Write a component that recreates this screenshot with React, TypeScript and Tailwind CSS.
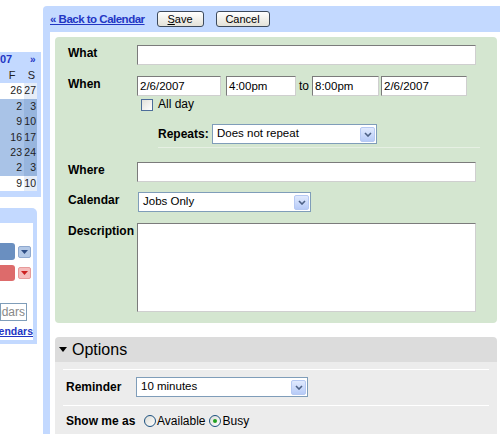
import React from 'react';

// weeks shown in the mini calendar (only Fri / Sat visible in this crop)
const calRows = [
  { f: '26', s: '27', hl: false, h: 'h-[16px]' },
  { f: '2', s: '3', hl: true, h: 'h-[15px]' },
  { f: '9', s: '10', hl: true, h: 'h-[16px]' },
  { f: '16', s: '17', hl: true, h: 'h-[15px]' },
  { f: '23', s: '24', hl: true, h: 'h-[15px]' },
  { f: '2', s: '3', hl: true, h: 'h-[16px]' },
  { f: '9', s: '10', hl: false, h: 'h-[15px]' },
];

const Chevron = () => (
  <svg width="8" height="5" viewBox="0 0 8 5">
    <path d="M1 1 L4 4 L7 1" fill="none" stroke="#4d6185" strokeWidth="1.6" />
  </svg>
);

const DropBtn = () => (
  <div className="w-[15px] h-[15px] rounded-[2px] border border-[#b6c9f3] bg-gradient-to-b from-[#e1eafe] to-[#b7cbf7] flex items-center justify-center">
    <Chevron />
  </div>
);

const Field = ({ className, value = '' }: { className: string; value?: string }) => (
  <div
    className={`bg-white border border-t-[#7b7b7b] border-l-[#7b7b7b] border-r-[#cfcfcf] border-b-[#cfcfcf] pl-[2px] text-[11.5px] leading-[18px] text-black whitespace-nowrap overflow-hidden ${className}`}
  >
    {value}
  </div>
);

const Select = ({ className, value }: { className: string; value: string }) => (
  <div
    className={`h-[20px] bg-white border border-[#7f9db9] flex items-center pl-[4px] pr-[1px] text-[11.5px] text-black ${className}`}
  >
    <span className="flex-1 whitespace-nowrap">{value}</span>
    <DropBtn />
  </div>
);

const Radio = ({ checked }: { checked?: boolean }) => (
  <div className="w-[12px] h-[12px] rounded-full border border-[#1c5180] bg-gradient-to-br from-[#dcdcd6] to-white flex items-center justify-center">
    {checked && <div className="w-[4px] h-[4px] rounded-full bg-[#21a121]" />}
  </div>
);

const Label = ({ children }: { children: React.ReactNode }) => (
  <div className="w-[69px] shrink-0 text-[12px] font-bold text-black leading-[16px]">{children}</div>
);

export default function App() {
  return (
    <div className="w-[500px] h-[434px] overflow-hidden bg-white flex font-['Liberation_Sans',Arial,sans-serif] text-black">
      {/* Sidebar (cropped) */}
      <aside className="w-[43px] shrink-0 pt-[52px] flex flex-col">
        {/* Mini calendar */}
        <div className="w-[41px] bg-[#c3d9ff] pr-[4px] pb-[6px]">
          <div className="h-[15px] flex items-center text-[11px] font-bold text-[#2236c4]">
            <div className="w-[24px] whitespace-nowrap">07</div>
            <div className="pl-[6px] text-[10px]">»</div>
          </div>
          <div className="h-[16px] flex items-center text-[11px] text-[#222]">
            <div className="w-[24px] text-center">F</div>
            <div className="w-[13px] text-center pl-[2px]">S</div>
          </div>
          {calRows.map((r, i) => (
            <div key={i} className={`${r.h} flex text-[10.5px] text-[#222] leading-[15px]`}>
              <div className={`w-[24px] text-right pr-[2px] ${r.hl ? 'bg-[#a9c3e7]' : 'bg-white'}`}>{r.f}</div>
              <div className={`w-[13px] text-right pr-px ${r.hl ? 'bg-[#97b5de]' : 'bg-[#e6edf8]'}`}>{r.s}</div>
            </div>
          ))}
        </div>

        {/* Calendars list */}
        <div className="mt-[11px] w-[37px]">
          <div className="h-[15px] bg-[#c3d9ff] rounded-tr-[5px]" />
          <div className="bg-white border-r-[4px] border-b-[4px] border-[#c3d9ff] pt-[20px] pb-[2px]">
            <div className="flex items-center">
              <div className="w-[15px] h-[17px] bg-[#6a8fc0] rounded-r-[3px]" />
              <div className="ml-[3px] w-[13px] h-[12px] rounded-[2px] border border-[#8fa9cf] bg-[#b3c8e6] flex items-center justify-center">
                <svg width="7" height="4" viewBox="0 0 7 4">
                  <path d="M0 0 H7 L3.5 4 Z" fill="#2f4f86" />
                </svg>
              </div>
            </div>
            <div className="mt-[5px] flex items-center">
              <div className="w-[15px] h-[16px] bg-[#dd6b6b] rounded-r-[3px]" />
              <div className="ml-[3px] w-[13px] h-[12px] rounded-[2px] border border-[#e69a9a] bg-[#f5bcbc] flex items-center justify-center">
                <svg width="7" height="4" viewBox="0 0 7 4">
                  <path d="M0 0 H7 L3.5 4 Z" fill="#cc2020" />
                </svg>
              </div>
            </div>
            <div className="mt-[22px] w-[27px] h-[18px] border border-[#7f9db9] bg-white overflow-hidden flex justify-end items-center whitespace-nowrap text-[12px] text-[#888] pr-[1px]">
              Search calendars
            </div>
            <div className="mt-[4px] h-[13px] overflow-hidden flex justify-end whitespace-nowrap text-[10.5px] font-bold text-[#2236c4] underline leading-[13px]">
              Manage calendars
            </div>
          </div>
        </div>
      </aside>

      {/* Main panel */}
      <main className="flex-1 mt-[6px] bg-[#c3d9ff] rounded-tl-[4px] pl-[7px] flex flex-col">
        {/* Top bar */}
        <div className="h-[26px] shrink-0 flex items-center">
          <a className="text-[11.5px] font-bold tracking-[-0.5px] text-[#2236c4] underline leading-[14px]">
            « Back to Calendar
          </a>
          <button className="ml-[12px] w-[47px] h-[16px] rounded-[3px] border border-[#3d4a5c] bg-gradient-to-b from-white to-[#e4e2d8] text-[11px] leading-[13px]">
            <span className="underline">S</span>ave
          </button>
          <button className="ml-[12px] w-[54px] h-[16px] rounded-[3px] border border-[#3d4a5c] bg-gradient-to-b from-white to-[#e4e2d8] text-[11px] leading-[13px]">
            Cancel
          </button>
        </div>

        {/* Content */}
        <div className="flex-1 bg-white pl-[5px] pr-[7px] pt-[5px]">
          {/* Event details */}
          <div className="bg-[#d4e6d0] rounded-[4px] pl-[13px] pr-[17px] pt-[8px] pb-[11px]">
            <div className="flex">
              <Label>What</Label>
              <Field className="w-[339px] h-[20px]" />
            </div>

            <div className="flex mt-[11px]">
              <Label>When</Label>
              <div className="flex items-center">
                <Field className="w-[84px] h-[20px]" value="2/6/2007" />
                <Field className="ml-[5px] w-[70px] h-[20px]" value="4:00pm" />
                <span className="mx-[3px] text-[12px]">to</span>
                <Field className="w-[67px] h-[20px]" value="8:00pm" />
                <Field className="ml-[2px] w-[86px] h-[20px]" value="2/6/2007" />
              </div>
            </div>

            <div className="flex mt-[2px] pl-[73px] items-center h-[13px]">
              <div className="w-[12px] h-[12px] border border-[#4d6d9a] bg-gradient-to-br from-[#e2e1da] to-white" />
              <span className="ml-[5px] text-[12px] leading-[13px]">All day</span>
            </div>

            <div className="flex mt-[13px] pl-[90px] items-center">
              <span className="w-[54px] text-[12px] font-bold">Repeats:</span>
              <Select className="w-[165px]" value="Does not repeat" />
            </div>
            <div className="ml-[90px] mt-[3px] w-[322px] h-px bg-[#e6f0e3]" />

            <div className="flex mt-[14px]">
              <Label>Where</Label>
              <Field className="w-[339px] h-[20px]" />
            </div>

            <div className="flex mt-[10px]">
              <Label>Calendar</Label>
              <Select className="ml-px w-[173px]" value="Jobs Only" />
            </div>

            <div className="flex mt-[11px]">
              <Label>Description</Label>
              <Field className="w-[339px] h-[89px]" />
            </div>
          </div>

          {/* Options */}
          <div className="mt-[14px] rounded-t-[4px] overflow-hidden">
            <div className="h-[25px] bg-[#dcdcdc] flex items-center pl-[4px]">
              <svg width="8" height="5" viewBox="0 0 8 5">
                <path d="M0 0 H8 L4 5 Z" fill="#000" />
              </svg>
              <span className="ml-[5px] text-[16px] leading-[18px]">Options</span>
            </div>
            <div className="bg-[#ececec] pt-[7px] pb-[10px]">
              <div className="mx-[8px] h-px bg-white" />
              <div className="flex items-center pl-[11px] mt-[7px]">
                <span className="w-[70px] text-[12px] font-bold">Reminder</span>
                <Select className="w-[172px]" value="10 minutes" />
              </div>
              <div className="mx-[8px] mt-[8px] h-px bg-white" />
              <div className="flex items-center pl-[11px] mt-[5px] h-[20px] text-[12px]">
                <span className="w-[78px] font-bold">Show me as</span>
                <Radio />
                <span className="ml-px">Available</span>
                <div className="ml-[4px]">
                  <Radio checked />
                </div>
                <span className="ml-px">Busy</span>
              </div>
            </div>
          </div>
        </div>
      </main>
    </div>
  );
}
